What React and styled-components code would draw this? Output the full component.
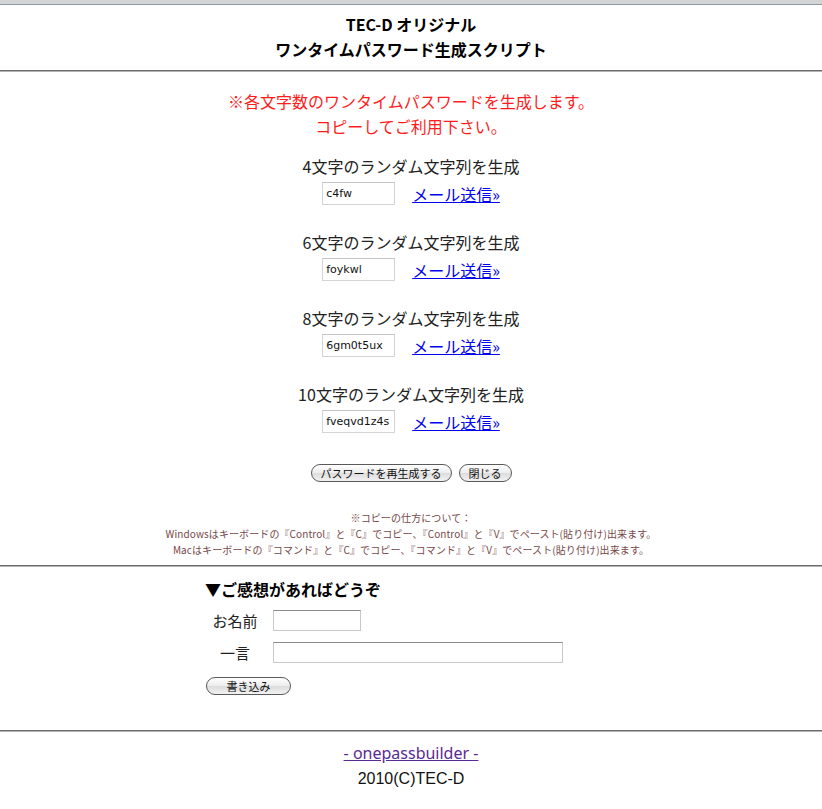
import React from "react";
import styled, { createGlobalStyle } from "styled-components";

const Global = createGlobalStyle`
  html, body { margin: 0; padding: 0; background: #fff; }
  body { font-family: "Noto Sans CJK JP", "Noto Sans", sans-serif; color: #111; }
`;

const TopBar = styled.div`
  height: 4px;
  background: #d2d4d6;
  border-bottom: 1px solid #8e98a2;
`;

const Header = styled.header`
  padding-top: 7px;
  text-align: center;
`;

const Title = styled.div`
  font-size: 16px;
  line-height: 25px;
  font-weight: 700;
  color: #000;
`;

const Rule = styled.hr`
  margin: ${(p) => p.$mt || 0}px 0 0;
  border: 0;
  border-top: 1px solid #6c6c6c;
  border-bottom: 1px solid #b4b4b4;
  height: 0;
`;

const Main = styled.main`
  text-align: center;
  padding-top: 17px;
`;

const Notice = styled.div`
  color: #ff1c1c;
  font-size: 16px;
  line-height: 25px;
  margin-bottom: 15px;
`;

const Group = styled.section`
  margin-bottom: 25px;
`;

const GroupLabel = styled.div`
  font-size: 16px;
  line-height: 25px;
  color: #222;
`;

const Row = styled.div`
  display: flex;
  justify-content: center;
  align-items: center;
  gap: 17px;
  margin-top: 3px;
`;

const PassInput = styled.input`
  box-sizing: border-box;
  width: 73px;
  height: 23px;
  padding: 0 3px;
  border: 1px solid #d4d4d4;
  border-top-color: #c4c4c4;
  font-family: "DejaVu Sans", sans-serif;
  font-size: 11px;
  color: #111;
  outline: none;
`;

const MailLink = styled.a`
  font-size: 16px;
  color: #0000ee;
  text-decoration: underline;
  line-height: 20px;
`;

const Buttons = styled.div`
  display: flex;
  justify-content: center;
  gap: 7px;
  margin-top: 31px;
`;

const PillButton = styled.button`
  box-sizing: border-box;
  height: 18px;
  padding: 0 ${(p) => p.$pad || 9}px;
  border: 1px solid #5a5a5a;
  border-radius: 9px;
  background: linear-gradient(#ffffff, #ececec 50%, #dcdcdc 51%, #f2f2f2);
  font-family: "Noto Sans CJK JP", sans-serif;
  font-size: 11px;
  line-height: 16px;
  color: #111;
  min-width: ${(p) => p.$w || 0}px;
  cursor: pointer;
`;

const Notes = styled.div`
  margin-top: 28px;
  font-size: 10px;
  line-height: 16px;
  letter-spacing: 0.1px;
  color: #774848;
  padding-bottom: 7px;
`;

const Feedback = styled.section`
  padding: 10px 0 0 205px;
  height: 163px;
  box-sizing: border-box;
`;

const FeedbackTitle = styled.h2`
  margin: 0;
  font-size: 16px;
  line-height: 25px;
  font-weight: 700;
  color: #000;
`;

const FormGrid = styled.div`
  display: grid;
  grid-template-columns: 60px auto;
  column-gap: 8px;
  row-gap: 11px;
  align-items: center;
  margin-top: 8px;
`;

const FieldLabel = styled.label`
  text-align: center;
  font-size: 15px;
  color: #222;
`;

const TextInput = styled.input`
  box-sizing: border-box;
  width: ${(p) => p.$w}px;
  height: 21px;
  border: 1px solid #c8c8c8;
  border-top-color: #8a8a8a;
  outline: none;
  font-size: 12px;
`;

const SubmitWrap = styled.div`
  margin-top: 9px;
  margin-left: 1px;
`;

const Footer = styled.footer`
  text-align: center;
  padding-top: 9px;
  font-family: "Liberation Sans", "Noto Sans CJK JP", sans-serif;
  font-size: 16px;
  line-height: 25px;
`;

const FooterLink = styled.a`
  color: #5b2a92;
  text-decoration: underline;
  font-family: "Noto Sans", sans-serif;
  font-size: 16px;
`;

const Copy = styled.div`
  color: #111;
`;

const groups = [
  { n: 4, v: "c4fw" },
  { n: 6, v: "foykwl" },
  { n: 8, v: "6gm0t5ux" },
  { n: 10, v: "fveqvd1z4s" },
];

export default function App() {
  return (
    <>
      <Global />
      <TopBar />
      <Header>
        <Title>TEC-D オリジナル</Title>
        <Title>ワンタイムパスワード生成スクリプト</Title>
      </Header>
      <Rule $mt={8} />
      <Main>
        <Notice>
          ※各文字数のワンタイムパスワードを生成します。
          <br />
          コピーしてご利用下さい。
        </Notice>
        {groups.map((g) => (
          <Group key={g.n}>
            <GroupLabel>{g.n}文字のランダム文字列を生成</GroupLabel>
            <Row>
              <PassInput defaultValue={g.v} readOnly />
              <MailLink href="#">メール送信»</MailLink>
            </Row>
          </Group>
        ))}
        <Buttons>
          <PillButton $w={138}>パスワードを再生成する</PillButton>
          <PillButton $w={52}>閉じる</PillButton>
        </Buttons>
        <Notes>
          ※コピーの仕方について：
          <br />
          Windowsはキーボードの『Control』と『C』でコピー、『Control』と『V』でペースト(貼り付け)出来ます。
          <br />
          Macはキーボードの『コマンド』と『C』でコピー、『コマンド』と『V』でペースト(貼り付け)出来ます。
        </Notes>
      </Main>
      <Rule />
      <Feedback>
        <FeedbackTitle>▼ご感想があればどうぞ</FeedbackTitle>
        <FormGrid>
          <FieldLabel>お名前</FieldLabel>
          <TextInput $w={88} />
          <FieldLabel>一言</FieldLabel>
          <TextInput $w={290} />
        </FormGrid>
        <SubmitWrap>
          <PillButton $w={85}>書き込み</PillButton>
        </SubmitWrap>
      </Feedback>
      <Rule />
      <Footer>
        <FooterLink href="#">- onepassbuilder -</FooterLink>
        <Copy>2010(C)TEC-D</Copy>
      </Footer>
    </>
  );
}
